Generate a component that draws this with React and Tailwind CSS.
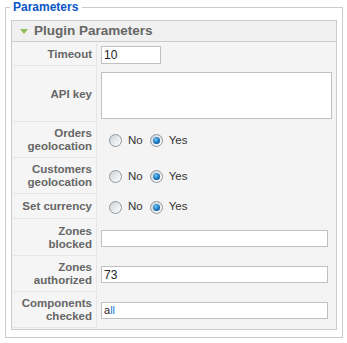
import React from "react";

function Radio({ checked }) {
  return (
    <span className="w-[13px] h-[13px] rounded-full border border-[#8e979f] bg-[linear-gradient(135deg,#cfd3d6,#ffffff)] flex items-center justify-center shrink-0">
      {checked && (
        <span className="w-[7px] h-[7px] rounded-full bg-[radial-gradient(circle_at_40%_35%,#6cc8ff,#0b5ea8_70%,#063e70)]" />
      )}
    </span>
  );
}

function RadioGroup() {
  return (
    <div className="flex items-center pl-[8px] text-[11.5px] text-[#333]">
      <Radio />
      <span className="ml-[6px]">No</span>
      <span className="ml-[7px]">
        <Radio checked />
      </span>
      <span className="ml-[6px]">Yes</span>
    </div>
  );
}

function Row({ h, label, children }) {
  return (
    <div className={`flex ${h}`}>
      <div className="w-[84px] shrink-0 bg-[#f5f5f5] border-b border-r border-[#e6e6e6] flex items-center justify-end pr-[4px] text-right text-[11.5px] leading-[13px] font-bold text-[#666]">
        <span>{label}</span>
      </div>
      <div className="ml-[1px] flex-1 flex items-center pl-[3px]">{children}</div>
    </div>
  );
}

function TextInput({ w, h, children }) {
  return (
    <div className={`${w} ${h} bg-white border border-[#c0c0c0] flex items-center pl-[2px] text-[12px] text-[#222] leading-none`}>
      {children}
    </div>
  );
}

export default function App() {
  return (
    <div className="w-[347px] h-[343px] bg-white" style={{ fontFamily: '"Liberation Sans", Arial, sans-serif' }}>
      <fieldset className="ml-[5px] w-[338px] border border-[#cccccc] px-[5px] pb-[7px]">
        <legend className="ml-[-1px] pl-[3px] pr-[4px] text-[12px] leading-[15px] font-bold text-[#0b55c4]">
          Parameters
        </legend>
        <div className="mt-[5px] border border-[#cccccc] bg-[#f4f4f4]">
          <div className="h-[21px] bg-[#f0f0f0] border-b border-[#cccccc] flex items-center pl-[8px]">
            <svg width="8" height="5" viewBox="0 0 8 5" className="shrink-0">
              <polygon points="0,0 8,0 4,5" fill="#8cbf5a" />
            </svg>
            <span className="ml-[6px] text-[13.5px] font-bold text-[#666] leading-none">Plugin Parameters</span>
          </div>
          <div className="px-[1px] pt-[1px] pb-[1px] flex flex-col gap-[1px]">
            <Row h="h-[23px]" label="Timeout">
              <TextInput w="w-[60px]" h="h-[18px]">10</TextInput>
            </Row>
            <Row h="h-[55px]" label="API key">
              <div className="w-[231px] h-[47px] bg-white border border-[#c0c0c0] mt-[1px]" />
            </Row>
            <Row h="h-[35px]" label={<>Orders<br />geolocation</>}>
              <RadioGroup />
            </Row>
            <Row h="h-[35px]" label={<>Customers<br />geolocation</>}>
              <RadioGroup />
            </Row>
            <Row h="h-[24px]" label="Set currency">
              <RadioGroup />
            </Row>
            <Row h="h-[36px]" label={<>Zones<br />blocked</>}>
              <TextInput w="w-[227px]" h="h-[17px]" />
            </Row>
            <Row h="h-[35px]" label={<>Zones<br />authorized</>}>
              <TextInput w="w-[227px]" h="h-[17px]">73</TextInput>
            </Row>
            <Row h="h-[35px]" label={<>Components<br />checked</>}>
              <TextInput w="w-[227px]" h="h-[17px]">
                <span className="text-[11px]">a</span>
                <span className="text-[11px] text-[#1e78d0]">ll</span>
              </TextInput>
            </Row>
          </div>
        </div>
      </fieldset>
    </div>
  );
}
